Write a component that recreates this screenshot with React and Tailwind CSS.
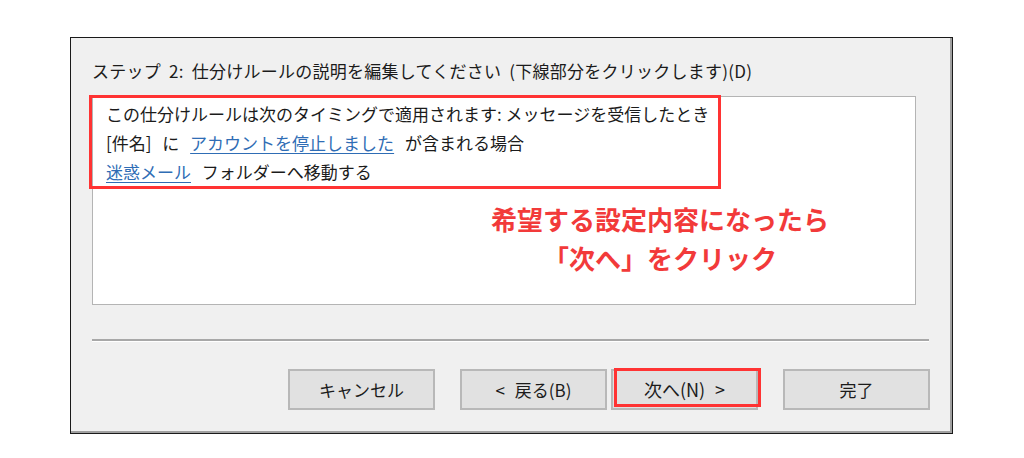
export default function App() {
  const font = { fontFamily: '"Noto Sans CJK JP", "Noto Sans", sans-serif' };
  const btn = "w-[147px] h-[41px] border-2 border-[#b8b8b8] bg-[#e1e1e1] text-[17px] text-[#1b1b1b] [word-spacing:6px]";
  return (
    <div className="w-[1024px] h-[458px] bg-white pt-[37px] pl-[70px]" style={font}>
      <div className="relative w-[883px] h-[397px] border border-[#1a1a1a] bg-[#f0f0f0]">
        <div className="h-full border-r-2 border-b-2 border-[#a0a0a0] flex flex-col">
          <div className="pl-[21px] mt-[21px] h-[24px] leading-[24px] text-[17px] text-[#1b1b1b] whitespace-nowrap tracking-[0.25px] [word-spacing:4px]">
            ステップ 2: 仕分けルールの説明を編集してください (下線部分をクリックします)(D)
          </div>
          <div className="relative ml-[21px] mt-[13px] w-[824px] h-[209px] border border-[#b4b4b4] bg-white">
            <div className="pl-[13px] pt-[2px] text-[17px] leading-[29px] text-[#1b1b1b] whitespace-nowrap">
              <div>この仕分けルールは次のタイミングで適用されます: メッセージを受信したとき</div>
              <div className="[word-spacing:7px]">
                [件名] に <span className="text-[#2f6db5] underline underline-offset-[3px]">アカウントを停止しました</span> が含まれる場合
              </div>
              <div className="[word-spacing:7px]">
                <span className="text-[#2f6db5] underline underline-offset-[3px]">迷惑メール</span> フォルダーへ移動する
              </div>
            </div>
            <div className="absolute left-[-4px] top-[-2px] w-[632px] h-[94px] border-[3px] border-[#ff3333]" />
            <div className="absolute left-[367px] top-[102px] w-[400px] text-center text-[26px] leading-[39px] font-bold text-[#f23a3a] whitespace-nowrap">
              <div>希望する設定内容になったら</div>
              <div>「次へ」をクリック</div>
            </div>
          </div>
          <div className="ml-[21px] mt-[34px] w-[837px] border-t-2 border-[#a8a8a8] border-b border-b-white" />
          <div className="ml-[217px] mt-[27px] flex items-center">
            <button className={btn}>キャンセル</button>
            <button className={"ml-[25px] " + btn}>&lt; 戻る(B)</button>
            <div className="relative ml-[4px]">
              <button className={btn + " text-[18px]"}>次へ(N) &gt;</button>
              <div className="absolute left-[3px] top-[-1px] w-[147px] h-[39px] border-[3px] border-[#ff3333]" />
            </div>
            <button className={"ml-[25px] " + btn}>完了</button>
          </div>
        </div>
      </div>
    </div>
  );
}
